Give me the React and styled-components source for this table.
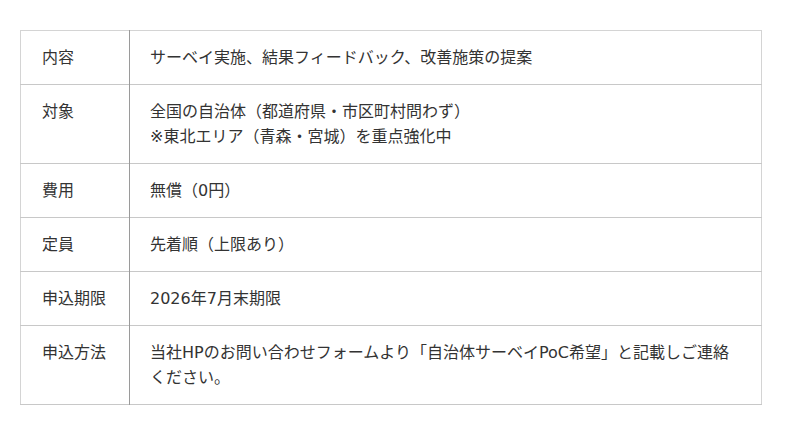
import React from "react";
import styled, { createGlobalStyle } from "styled-components";

const Global = createGlobalStyle`
  html, body { margin: 0; padding: 0; background: #ffffff; }
  body { font-family: "DejaVu Sans", "Noto Sans CJK JP", sans-serif; color: #333333; }
`;

const Page = styled.div`
  padding: 30px 0 0 20px;
`;

const Table = styled.table`
  width: 742px;
  border-collapse: collapse;
  border: 1px solid #d4d4d4;
  font-size: 16px;
  line-height: 25px;
`;

const Row = styled.tr`
  border-bottom: 1px solid #c8c8c8;
`;

const Label = styled.th`
  width: 87px;
  text-align: left;
  font-weight: 400;
  vertical-align: top;
  padding: 14px 0 14px 21px;
  border-right: 1px solid #9a9a9a;
`;

const Value = styled.td`
  vertical-align: top;
  padding: 14px 20px 14px 20px;
`;

const rows = [
  ["内容", ["サーベイ実施、結果フィードバック、改善施策の提案"]],
  ["対象", ["全国の自治体（都道府県・市区町村問わず）", "※東北エリア（青森・宮城）を重点強化中"]],
  ["費用", ["無償（0円）"]],
  ["定員", ["先着順（上限あり）"]],
  ["申込期限", ["2026年7月末期限"]],
  ["申込方法", ["当社HPのお問い合わせフォームより「自治体サーベイPoC希望」と記載しご連絡ください。"]],
];

export default function App() {
  return (
    <>
      <Global />
      <Page>
        <Table>
          <tbody>
            {rows.map(([k, v]) => (
              <Row key={k}>
                <Label>{k}</Label>
                <Value>
                  {v.map((line, i) => (
                    <React.Fragment key={i}>
                      {i > 0 && <br />}
                      {line}
                    </React.Fragment>
                  ))}
                </Value>
              </Row>
            ))}
          </tbody>
        </Table>
      </Page>
    </>
  );
}
